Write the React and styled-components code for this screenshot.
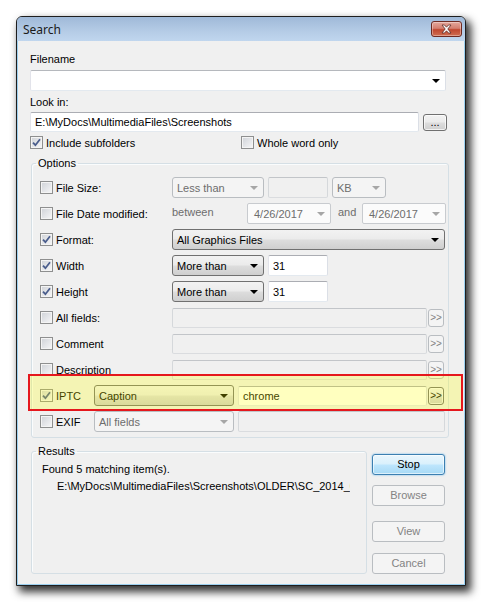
import React from 'react'
import styled, { createGlobalStyle, css } from 'styled-components'

const GlobalStyle = createGlobalStyle`
  body {
    margin: 0;
    background: #ffffff;
    font-family: "Liberation Sans", Arial, sans-serif;
    font-size: 11px;
    color: #000;
  }
`

const Page = styled.div`
  padding: 16px;
`

const Window = styled.div`
  width: 450px;
  height: 570px;
  box-sizing: border-box;
  border: 1px solid #1e1e1e;
  border-radius: 6px 6px 0 0;
  background: #c3d7ed;
  box-shadow: 4px 5px 9px 1px rgba(0, 0, 0, 0.8);
  display: flex;
  flex-direction: column;
`

const TitleBar = styled.div`
  height: 24px;
  flex: none;
  display: flex;
  align-items: center;
  justify-content: space-between;
  padding: 0 3px 0 6px;
  border-radius: 5px 5px 0 0;
  background: linear-gradient(#9fb9d8, #b5cce6 60%, #c0d6ee);
`

const Title = styled.span`
  font-family: "Noto Sans", "Open Sans", sans-serif;
  font-size: 12px;
  color: #1a1a1a;
`

const CloseButton = styled.div`
  width: 31px;
  height: 16px;
  box-sizing: border-box;
  border: 1px solid #6e2a22;
  border-radius: 3px;
  background: linear-gradient(#e4a89c, #d47f70 45%, #c0472f 55%, #cf6d52);
  box-shadow: inset 0 0 0 1px rgba(255, 255, 255, 0.35);
  display: flex;
  align-items: center;
  justify-content: center;
`

const Client = styled.div`
  flex: 1;
  border: 1px solid #9dd0ef;
  border-top: none;
  background: #f0f0f0;
  padding: 12px 0 0 12px;
  display: flex;
  flex-direction: column;
  align-items: flex-start;
`

const Label = styled.div`
  line-height: 13px;
  margin-top: ${(p) => p.$mt || 0}px;
`

const Line = styled.div`
  display: flex;
  align-items: center;
  gap: ${(p) => p.$gap ?? 4}px;
  margin-top: ${(p) => p.$mt || 0}px;
`

const Field = styled.div`
  box-sizing: border-box;
  width: ${(p) => p.$w}px;
  height: ${(p) => p.$h || 21}px;
  margin-left: ${(p) => p.$ml || 0}px;
  display: flex;
  align-items: center;
  padding: 0 4px;
  border: 1px solid #abadb3;
  border-color: #abadb3 #dbdfe6 #e3e9ef #e2e3ea;
  border-radius: 2px;
  background: #ffffff;
  white-space: nowrap;
  overflow: hidden;
  ${(p) =>
    p.$disabled &&
    css`
      background: #f0f0f0;
      border-color: #c2c5c9 #d5d8db #dadcdf #d5d8db;
      color: #6d6d6d;
    `}
`

const Select = styled.div`
  box-sizing: border-box;
  width: ${(p) => p.$w}px;
  height: 21px;
  display: flex;
  align-items: center;
  justify-content: space-between;
  padding: 0 5px 0 4px;
  border: 1px solid #707070;
  border-radius: 3px;
  background: linear-gradient(#f2f2f2 0%, #ebebeb 48%, #dddddd 52%, #cfcfcf 100%);
  white-space: nowrap;
  ${(p) =>
    p.$disabled &&
    css`
      border-color: #b9bdc1;
      background: #f4f4f4;
      color: #6d6d6d;
    `}
  ${(p) =>
    p.$edit &&
    css`
      border-color: #b5b8bd #dbdfe6 #e3e9ef #e2e3ea;
      border-radius: 2px;
      background: #ffffff;
    `}
  ${(p) =>
    p.$date &&
    css`
      border-color: #c8cbcf;
      border-radius: 2px;
      background: #fbfbfb;
      color: #6d6d6d;
      padding-left: 6px;
    `}
`

const Arrow = styled.span`
  width: 0;
  height: 0;
  border-left: 4px solid transparent;
  border-right: 4px solid transparent;
  border-top: 4px solid ${(p) => (p.$muted ? '#a6a6a6' : '#000')};
  margin-top: 1px;
`

const PushButton = styled.div`
  box-sizing: border-box;
  width: ${(p) => p.$w}px;
  height: ${(p) => p.$h || 21}px;
  margin-top: ${(p) => p.$mt || 0}px;
  display: flex;
  align-items: center;
  justify-content: center;
  border: 1px solid #707070;
  border-radius: 3px;
  background: linear-gradient(#f2f2f2 0%, #ebebeb 48%, #dddddd 52%, #cfcfcf 100%);
  box-shadow: inset 0 0 0 1px rgba(255, 255, 255, 0.7);
  font-size: ${(p) => p.$fs || 11}px;
  line-height: 1;
  ${(p) =>
    p.$default &&
    css`
      border-color: #3c7fb1;
      background: linear-gradient(#eaf6fd 0%, #d9f0fc 48%, #bee6fd 52%, #a7d9f5 100%);
      box-shadow: inset 0 0 0 1px rgba(255, 255, 255, 0.6), 0 0 2px #5fb4ec;
    `}
  ${(p) =>
    p.$disabled &&
    css`
      border-color: #b9bdc1;
      background: #f4f4f4;
      box-shadow: none;
      color: #838383;
    `}
`

const Group = styled.fieldset`
  box-sizing: border-box;
  width: ${(p) => p.$w}px;
  margin: ${(p) => p.$mt || 0}px 0 0 1px;
  padding: 0;
  border: 1px solid #d5dfe5;
  border-radius: 3px;
  box-shadow: inset 1px 1px 0 #fafcfd;
`

const Legend = styled.legend`
  margin-left: 4px;
  padding: 0 2px;
  line-height: 13px;
`

const Rows = styled.div`
  display: flex;
  flex-direction: column;
  gap: 5px;
  padding: 7px 0 5px 8px;
`

const Row = styled.div`
  position: relative;
  display: flex;
  align-items: center;
  gap: ${(p) => p.$gap ?? 4}px;
  height: 21px;
  ${(p) =>
    p.$highlight &&
    css`
      &::after {
        content: '';
        position: absolute;
        left: -12px;
        right: -15px;
        top: -11px;
        bottom: -5px;
        border: 2px solid #e5171d;
        background: rgba(255, 255, 0, 0.25);
        pointer-events: none;
      }
    `}
`

const CheckCell = styled.label`
  width: ${(p) => p.$w}px;
  flex: none;
  display: flex;
  align-items: center;
  gap: 3px;
  white-space: nowrap;
`

const Box = styled.span`
  width: 13px;
  height: 13px;
  box-sizing: border-box;
  flex: none;
  border: 1px solid #8e8f8f;
  background: linear-gradient(135deg, #cfd2d7, #f7f7f8);
  box-shadow: inset 0 0 0 1px #f4f4f4;
  display: flex;
  align-items: center;
  justify-content: center;
`

const Muted = styled.span`
  width: ${(p) => p.$w}px;
  padding-left: ${(p) => p.$pl || 0}px;
  box-sizing: border-box;
  flex: none;
  color: #6d6d6d;
  margin-top: -3px;
`

const Bottom = styled.div`
  display: flex;
  gap: 5px;
  margin-top: 7px;
`

const ResultList = styled.div`
  height: 110px;
  padding: 3px 0 0 10px;
  width: 308px;
  overflow: hidden;
  white-space: nowrap;
`

const ResultLine = styled.div`
  line-height: 17px;
  padding-left: ${(p) => p.$indent || 0}px;
`

const ButtonColumn = styled.div`
  display: flex;
  flex-direction: column;
  padding-top: 9px;
`

const Check = ({ checked, label, w }) => (
  <CheckCell $w={w}>
    <Box>
      {checked && (
        <svg width="9" height="9" viewBox="0 0 9 9">
          <path d="M1 4.6 L3.4 7.2 L8 1.2" fill="none" stroke="#4a5d8c" strokeWidth="1.8" />
        </svg>
      )}
    </Box>
    {label}
  </CheckCell>
)

const Combo = ({ w, value, disabled }) => (
  <Select $w={w} $disabled={disabled}>
    <span>{value}</span>
    <Arrow $muted={disabled} />
  </Select>
)

const DateBox = ({ value }) => (
  <Select $w={84} $date>
    <span>{value}</span>
    <Arrow $muted />
  </Select>
)

const More = ({ disabled }) => (
  <PushButton $w={16} $h={18} $fs={10} $disabled={disabled}>
    &gt;&gt;
  </PushButton>
)

const App = () => {
  return (
    <Page>
      <GlobalStyle />
      <Window>
        <TitleBar>
          <Title>Search</Title>
          <CloseButton>
            <svg width="13" height="10" viewBox="0 0 13 10">
              <path
                d="M2 1 H4.5 L6.5 3.2 L8.5 1 H11 L7.8 5 L11 9 H8.5 L6.5 6.8 L4.5 9 H2 L5.2 5 Z"
                fill="#ffffff"
                stroke="#5a2a24"
                strokeWidth="0.8"
              />
            </svg>
          </CloseButton>
        </TitleBar>
        <Client>
          <Label>Filename</Label>
          <Line $mt={4}>
            <Select $w={416} $edit>
              <span />
              <Arrow />
            </Select>
          </Line>
          <Label $mt={5}>Look in:</Label>
          <Line $mt={3} $gap={4}>
            <Field $w={389} $h={20}>E:\MyDocs\MultimediaFiles\Screenshots</Field>
            <PushButton $w={24} $h={17}>...</PushButton>
          </Line>
          <Line $mt={4} $gap={0}>
            <Check checked label="Include subfolders" w={211} />
            <Check label="Whole word only" w={120} />
          </Line>

          <Group $w={418} $mt={8}>
            <Legend>Options</Legend>
            <Rows>
              <Row>
                <Check label="File Size:" w={128} />
                <Combo w={92} value="Less than" disabled />
                <Field $w={60} $disabled />
                <Combo w={54} value="KB" disabled />
              </Row>
              <Row $gap={0}>
                <Check label="File Date modified:" w={132} />
                <Muted $w={75}>between</Muted>
                <DateBox value="4/26/2017" />
                <Muted $w={31} $pl={7}>and</Muted>
                <DateBox value="4/26/2017" />
              </Row>
              <Row>
                <Check checked label="Format:" w={128} />
                <Combo w={273} value="All Graphics Files" />
              </Row>
              <Row>
                <Check checked label="Width" w={128} />
                <Combo w={92} value="More than" />
                <Field $w={60}>31</Field>
              </Row>
              <Row>
                <Check checked label="Height" w={128} />
                <Combo w={92} value="More than" />
                <Field $w={60}>31</Field>
              </Row>
              <Row $gap={1}>
                <Check label="All fields:" w={131} />
                <Field $w={255} $h={20} $disabled />
                <More disabled />
              </Row>
              <Row $gap={1}>
                <Check label="Comment" w={131} />
                <Field $w={255} $h={20} $disabled />
                <More disabled />
              </Row>
              <Row $gap={1}>
                <Check label="Description" w={131} />
                <Field $w={255} $h={20} $disabled />
                <More disabled />
              </Row>
              <Row $gap={1} $highlight>
                <Check checked label="IPTC" w={53} />
                <Combo w={140} value="Caption" />
                <Field $w={189} $h={20} $ml={3}>
                  chrome
                </Field>
                <More />
              </Row>
              <Row $gap={4}>
                <Check label="EXIF" w={50} />
                <Combo w={140} value="All fields" disabled />
                <Field $w={207} $disabled />
              </Row>
            </Rows>
          </Group>

          <Bottom>
            <Group $w={336}>
              <Legend>Results</Legend>
              <ResultList>
                <ResultLine>Found 5 matching item(s).</ResultLine>
                <ResultLine $indent={15}>
                  E:\MyDocs\MultimediaFiles\Screenshots\OLDER\SC_2014_06_01.png
                </ResultLine>
              </ResultList>
            </Group>
            <ButtonColumn>
              <PushButton $w={73} $default>
                Stop
              </PushButton>
              <PushButton $w={73} $mt={10} $disabled>
                Browse
              </PushButton>
              <PushButton $w={73} $mt={15} $disabled>
                View
              </PushButton>
              <PushButton $w={73} $mt={11} $disabled>
                Cancel
              </PushButton>
            </ButtonColumn>
          </Bottom>
        </Client>
      </Window>
    </Page>
  )
}

export default App
